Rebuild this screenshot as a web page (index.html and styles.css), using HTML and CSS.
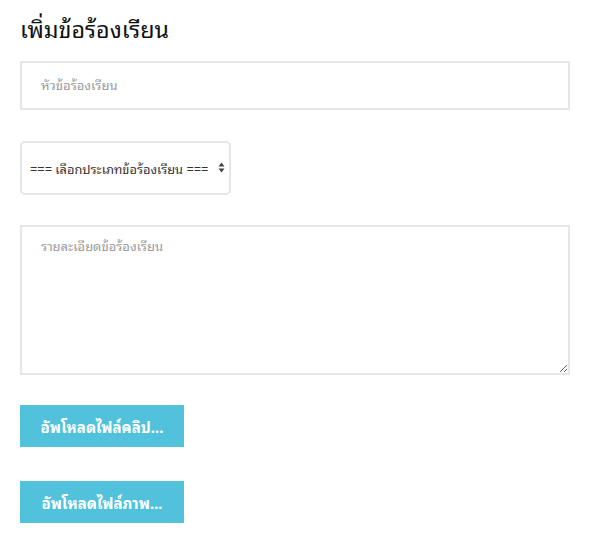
FILE: index.html
```html
<!DOCTYPE html>
<html lang="th">
<head>
<meta charset="utf-8">
<link rel="stylesheet" href="styles.css">
</head>
<body>
<div class="page">
  <h1 class="title">เพิ่มข้อร้องเรียน</h1>
  <form class="form">
    <input class="field" type="text" placeholder="หัวข้อร้องเรียน">
    <div class="select-wrap">
      <select class="select">
        <option>=== เลือกประเภทข้อร้องเรียน ===</option>
      </select>
      <svg class="select-arrows" width="7" height="11" viewBox="0 0 7 11"><path d="M3.5 0.5 L6.5 4.5 H0.5 Z M3.5 10.5 L6.5 6.5 H0.5 Z" fill="#444"/></svg>
    </div>
    <textarea class="area" placeholder="รายละเอียดข้อร้องเรียน"></textarea>
    <button type="button" class="btn">อัพโหลดไฟล์คลิป...</button>
    <button type="button" class="btn btn-last">อัพโหลดไฟล์ภาพ...</button>
  </form>
</div>
</body>
</html>
```
FILE: styles.css
```css
html, body {
  margin: 0;
  padding: 0;
  background: #fff;
}
body {
  font-family: "Noto Sans Thai Looped", "Noto Sans Thai", "Noto Sans", "DejaVu Sans", sans-serif;
  color: #111;
}
.page {
  padding: 12px 20px 0 20px;
}
.title {
  margin: 0;
  font-size: 23.3px;
  font-weight: 400;
  line-height: 32px;
  color: #111;
}
.form {
  display: flex;
  flex-direction: column;
  align-items: flex-start;
  margin-top: 17px;
}
.field {
  box-sizing: border-box;
  width: 550px;
  height: 49px;
  border: 2px solid #e6e6e6;
  border-radius: 0;
  padding: 0 19px 2px;
  font-family: inherit;
  font-size: 13px;
  outline: none;
}
.field::placeholder, .area::placeholder {
  color: #999;
}
.select-wrap {
  position: relative;
  margin-top: 31px;
}
.select {
  box-sizing: border-box;
  -webkit-appearance: none;
  appearance: none;
  width: 211px;
  height: 54px;
  border: 2px solid #e6e6e6;
  border-radius: 5px;
  background: #fff;
  padding: 0 0 0 8px;
  font-family: inherit;
  font-size: 12.8px;
  color: #333;
  outline: none;
  display: block;
}
.select-arrows {
  position: absolute;
  right: 6px;
  top: 21px;
  pointer-events: none;
}
.area {
  box-sizing: border-box;
  margin-top: 30px;
  width: 550px;
  height: 150px;
  border: 2px solid #e6e6e6;
  border-radius: 0;
  padding: 8px 19px;
  font-family: inherit;
  font-size: 13px;
  outline: none;
  resize: vertical;
  display: block;
}
.btn {
  box-sizing: border-box;
  margin-top: 30px;
  width: 164px;
  height: 42px;
  border: none;
  border-radius: 0;
  background: #52c1dc;
  color: #fff;
  font-family: inherit;
  font-size: 15px;
  font-weight: 700;
  padding: 0;
}
.btn-last {
  margin-top: 34px;
}
```
